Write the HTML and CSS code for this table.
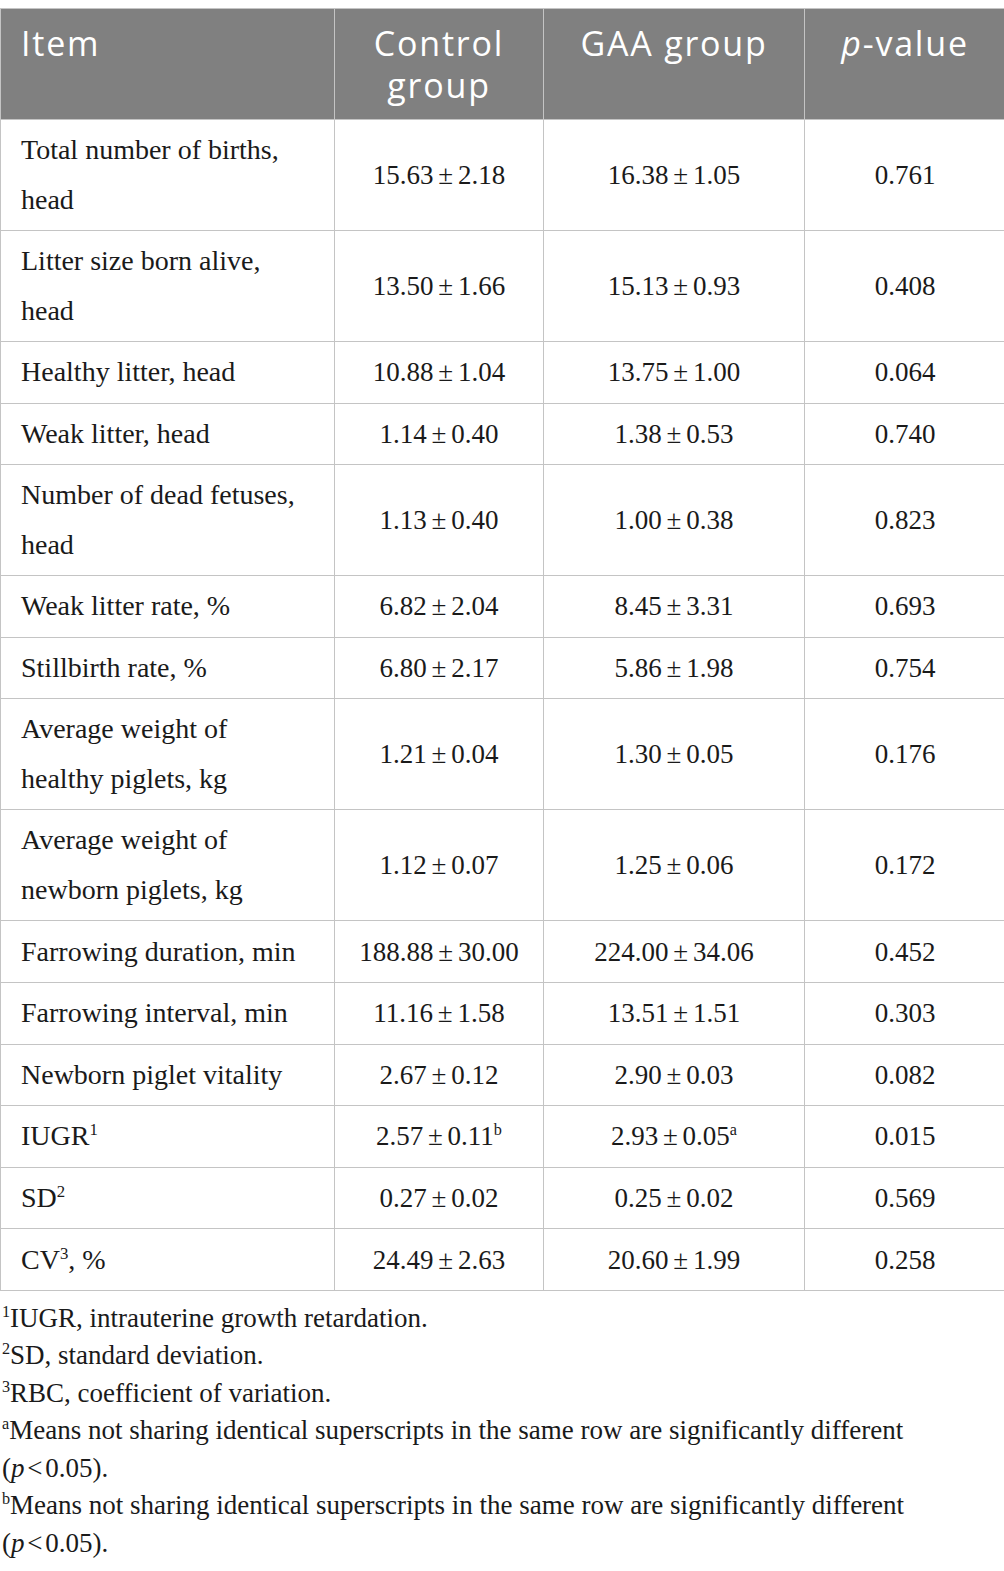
FILE: index.html
```html
<!DOCTYPE html>
<html>
  <head>
    <meta charset="utf-8" />
    <title>Reproductive performance of sows</title>
    <link rel="stylesheet" href="styles.css">
  </head>
  <body>
    <table class="results">
      <thead>
        <tr>
          <th class="item">Item</th>
          <th class="c2">Control group</th>
          <th class="c3">GAA group</th>
          <th class="c4"><i>p</i>-value</th>
        </tr>
      </thead>
      <tbody>
        <tr><td>Total number of births, head</td><td><span class="num">15.63 ± 2.18</span></td><td><span class="num">16.38 ± 1.05</span></td><td><span class="num">0.761</span></td></tr>
        <tr><td>Litter size born alive, head</td><td><span class="num">13.50 ± 1.66</span></td><td><span class="num">15.13 ± 0.93</span></td><td><span class="num">0.408</span></td></tr>
        <tr class="one"><td>Healthy litter, head</td><td><span class="num">10.88 ± 1.04</span></td><td><span class="num">13.75 ± 1.00</span></td><td><span class="num">0.064</span></td></tr>
        <tr class="one"><td>Weak litter, head</td><td><span class="num">1.14 ± 0.40</span></td><td><span class="num">1.38 ± 0.53</span></td><td><span class="num">0.740</span></td></tr>
        <tr><td>Number of dead fetuses, head</td><td><span class="num">1.13 ± 0.40</span></td><td><span class="num">1.00 ± 0.38</span></td><td><span class="num">0.823</span></td></tr>
        <tr class="one"><td>Weak litter rate, %</td><td><span class="num">6.82 ± 2.04</span></td><td><span class="num">8.45 ± 3.31</span></td><td><span class="num">0.693</span></td></tr>
        <tr class="one"><td>Stillbirth rate, %</td><td><span class="num">6.80 ± 2.17</span></td><td><span class="num">5.86 ± 1.98</span></td><td><span class="num">0.754</span></td></tr>
        <tr><td>Average weight of healthy piglets, kg</td><td><span class="num">1.21 ± 0.04</span></td><td><span class="num">1.30 ± 0.05</span></td><td><span class="num">0.176</span></td></tr>
        <tr><td>Average weight of newborn piglets, kg</td><td><span class="num">1.12 ± 0.07</span></td><td><span class="num">1.25 ± 0.06</span></td><td><span class="num">0.172</span></td></tr>
        <tr class="one"><td>Farrowing duration, min</td><td><span class="num">188.88 ± 30.00</span></td><td><span class="num">224.00 ± 34.06</span></td><td><span class="num">0.452</span></td></tr>
        <tr class="one"><td>Farrowing interval, min</td><td><span class="num">11.16 ± 1.58</span></td><td><span class="num">13.51 ± 1.51</span></td><td><span class="num">0.303</span></td></tr>
        <tr class="one"><td>Newborn piglet vitality</td><td><span class="num">2.67 ± 0.12</span></td><td><span class="num">2.90 ± 0.03</span></td><td><span class="num">0.082</span></td></tr>
        <tr class="one"><td>IUGR<sup>1</sup></td><td><span class="num">2.57 ± 0.11<sup>b</sup></span></td><td><span class="num">2.93 ± 0.05<sup>a</sup></span></td><td><span class="num">0.015</span></td></tr>
        <tr class="one"><td>SD<sup>2</sup></td><td><span class="num">0.27 ± 0.02</span></td><td><span class="num">0.25 ± 0.02</span></td><td><span class="num">0.569</span></td></tr>
        <tr class="one"><td>CV<sup>3</sup>, %</td><td><span class="num">24.49 ± 2.63</span></td><td><span class="num">20.60 ± 1.99</span></td><td><span class="num">0.258</span></td></tr>
      </tbody>
    </table>
    <div class="notes">
      <p><sup>1</sup>IUGR, intrauterine growth retardation.</p>
      <p><sup>2</sup>SD, standard deviation.</p>
      <p><sup>3</sup>RBC, coefficient of variation.</p>
      <p><sup>a</sup>Means not sharing identical superscripts in the same row are significantly different <span class="pv">(<i>p</i> &lt; 0.05).</span></p>
      <p><sup>b</sup>Means not sharing identical superscripts in the same row are significantly different <span class="pv">(<i>p</i> &lt; 0.05).</span></p>
    </div>
  </body>
</html>
```
FILE: styles.css
```css
body{
  margin: 8px 0 0 0;
  background: #ffffff;
  color: #1a1a1a;
  font-family: "Liberation Serif", "Times New Roman", serif;
}
table.results{
  width: 1005px;
  border-collapse: collapse;
  table-layout: fixed;
}
.results th{
  background: #808080;
  color: #ffffff;
  font-family: "Open Sans", Lato, sans-serif;
  font-weight: normal;
  font-size: 34px;
  letter-spacing: 1.8px;
  line-height: 42px;
  padding: 13px 20px 13px 20px;
  border: 1px solid #c4c4c4;
  vertical-align: top;
  text-align: center;
}
.results th.item{
  text-align: left;
  width: 293px;
}
.results th.c2{ width: 168px; }
.results th.c3{ width: 220px; }
.results th.c4{ width: 160px; }
.results td{
  font-size: 28px;
  line-height: 50px;
  padding: 5px 20px;
  border: 1px solid #c4c4c4;
  vertical-align: middle;
  text-align: center;
}
.results tr.one td{
  padding: 5.3px 20px;
}
.results td:first-child{
  text-align: left;
}
.num{
  display: inline-block;
  font-size: 27px;
  word-spacing: -2px;
  white-space: nowrap;
}
sup{
  font-size: 60%;
  line-height: 0;
}
.notes{
  margin-top: 9px;
  width: 960px;
  font-size: 27px;
  line-height: 37.5px;
}
.notes p{
  margin: 0;
  padding-left: 2px;
}
.pv{
  white-space: nowrap;
  word-spacing: -4px;
}
```
